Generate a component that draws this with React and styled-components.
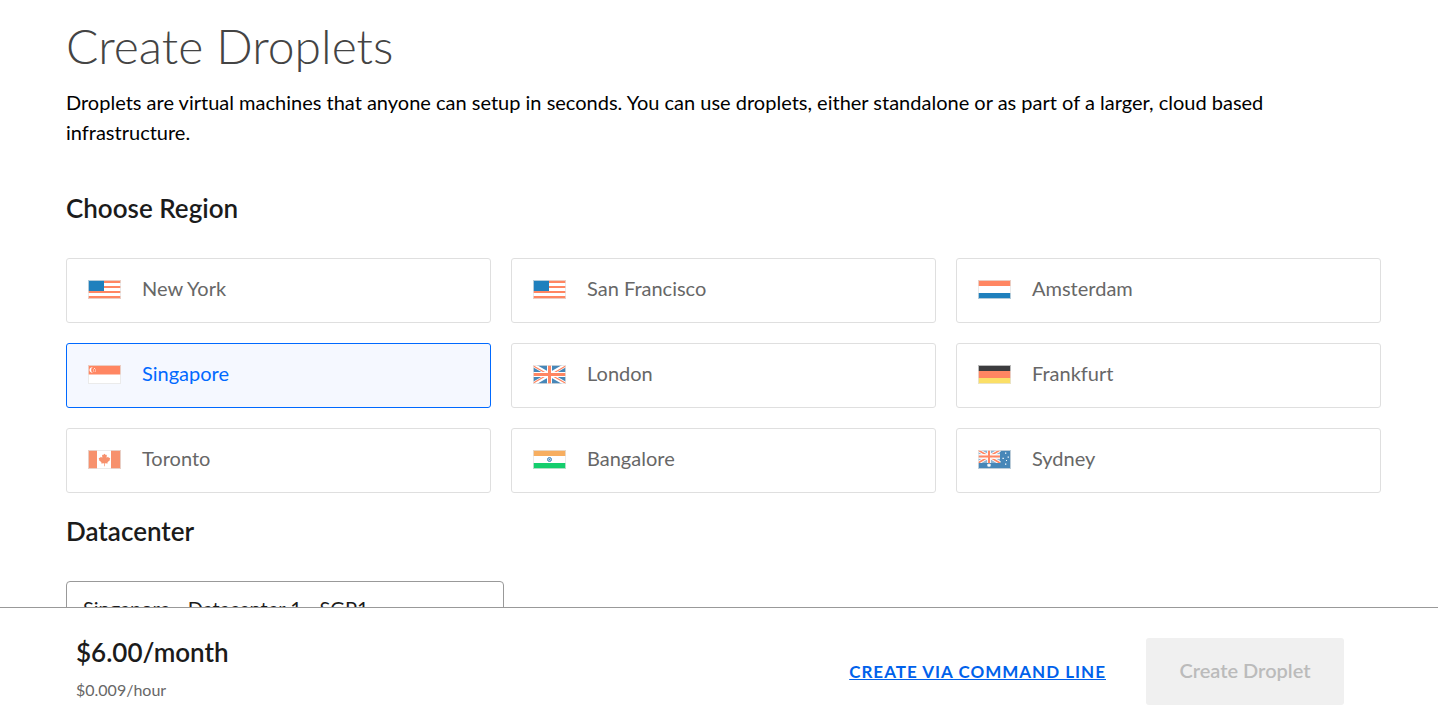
import React, { useState } from "react";
import styled, { createGlobalStyle } from "styled-components";

const GlobalStyle = createGlobalStyle`
  * { box-sizing: border-box; }
  body {
    margin: 0;
    background: #fff;
    color: #000;
    font-family: Lato, "Open Sans", sans-serif;
    font-size: 20px;
    line-height: 30px;
  }
`;

const Page = styled.main`
  padding: 16px 57px 140px 66px;
`;

const Title = styled.h1`
  margin: 0;
  font-size: 48px;
  font-weight: 300;
  line-height: 60px;
  color: #444;
`;

const Intro = styled.p`
  margin: 11px 0 45px;
`;

const SectionTitle = styled.h2`
  margin: 0 0 34px;
  font-size: 26px;
  font-weight: 600;
  line-height: 32px;
  color: #1b1b1b;
`;

const RegionGrid = styled.div`
  display: grid;
  grid-template-columns: repeat(3, 1fr);
  gap: 20px;
  margin-bottom: 22px;
`;

const RegionCard = styled.label`
  display: flex;
  align-items: center;
  gap: 21px;
  height: 65px;
  padding: 0 21px 2px;
  border: 1px solid ${(p) => (p.$active ? "#0069ff" : "#dfdfdf")};
  border-radius: 3px;
  background: ${(p) => (p.$active ? "#f5f8ff" : "#fff")};
  color: ${(p) => (p.$active ? "#0069ff" : "#676767")};
  cursor: pointer;

  &:focus-within { box-shadow: 0 0 0 1px #0069ff; }
`;

const RegionName = styled.span`
  padding-bottom: 4px;
`;

const RegionRadio = styled.input`
  position: absolute;
  opacity: 0;
  width: 1px;
  height: 1px;
  margin: 0;
  pointer-events: none;
`;

const FlagSvg = styled.svg`
  flex: none;
  display: block;
  width: 33px;
  height: 19px;
`;

const DatacenterSelect = styled.select`
  display: block;
  width: calc(100% / 3);
  height: 54px;
  padding: 0 16px;
  border: 1px solid #999;
  border-radius: 4px;
  background: #fff;
  color: #1b1b1b;
  font: inherit;
  appearance: none;
`;

const Footer = styled.footer`
  position: fixed;
  inset: auto 0 0;
  display: flex;
  align-items: flex-start;
  justify-content: space-between;
  padding: 30px 94px 15px 76px;
  border-top: 1px solid #999;
  background: #fff;
`;

const Price = styled.div`
  display: flex;
  flex-direction: column;
  gap: 12px;
`;

const Monthly = styled.strong`
  font-size: 26px;
  font-weight: 600;
  line-height: 28px;
  color: #1b1b1b;
`;

const Hourly = styled.span`
  font-size: 16px;
  line-height: 24px;
  color: #676767;
`;

const Actions = styled.div`
  display: flex;
  align-items: center;
  gap: 40px;
`;

const CommandLink = styled.a`
  font-size: 17px;
  font-weight: 700;
  letter-spacing: 1px;
  text-transform: uppercase;
  color: #0061eb;
`;

const CreateButton = styled.button`
  width: 198px;
  height: 67px;
  padding: 0 0 4px;
  border: 0;
  border-radius: 3px;
  background: #f0f0f0;
  color: #bbb;
  font: inherit;
  font-weight: 600;
`;

const RED = "#ff8662";
const NAVY = "#4787b8";
const BLUE = "#1f80bd";

function Flag({ base = "#fff", children }) {
  return (
    <FlagSvg viewBox="0 0 33 19" aria-hidden="true">
      <rect width="33" height="19" fill={base} />
      {children}
      <rect x=".5" y=".5" width="32" height="18" fill="none" stroke="#e4e4e4" strokeOpacity=".75" />
    </FlagSvg>
  );
}

const UsFlag = () => (
  <Flag>
    <path d="M0 0h33v3H0zM0 6h33v2H0zM0 11h33v2H0zM0 16h33v3H0z" fill={RED} />
    <path d="M0 0h16v11H0z" fill={BLUE} />
  </Flag>
);

const NlFlag = () => (
  <Flag>
    <path d="M0 0h33v6H0z" fill={RED} />
    <path d="M0 13h33v6H0z" fill={BLUE} />
  </Flag>
);

const SgFlag = () => (
  <Flag>
    <path d="M0 0h33v9.5H0z" fill={RED} />
    <path d="M4.8 2.2A2.8 2.8 0 1 0 4.8 7.7 3.1 3.1 0 0 1 4.8 2.2z" fill="#fff" />
    <path d="M6 3h1v1H6zM5 4.5h1v1H5zM7 4.5h1v1H7zM5.4 6.2h.8v.8h-.8zM6.9 6.2h.8v.8h-.8z" fill="#fff" fillOpacity=".8" />
  </Flag>
);

const GbFlag = () => (
  <Flag base={NAVY}>
    <path d="M0 0l33 19M33 0L0 19" stroke="#fff" strokeWidth="3.8" />
    <path d="M0 .8l14 8M19 9l14-8.2M0 18.2l14-8.2M19 10.5l14 8" stroke={RED} strokeWidth="1.1" />
    <path d="M14 0h5v19h-5zM0 7h33v5H0z" fill="#fff" />
    <path d="M15 0h3v19h-3zM0 8h33v3H0z" fill={RED} />
  </Flag>
);

const DeFlag = () => (
  <Flag base={RED}>
    <path d="M0 0h33v6H0z" fill="#3c3c3e" />
    <path d="M0 13h33v6H0z" fill="#fbdf66" />
  </Flag>
);

const CaFlag = () => (
  <Flag>
    <path d="M0 0h9v19H0zM23 0h10v19H23z" fill="#f7916d" />
    <path
      d="M16.5 3.8l1.3 1.3 1-.3-.2 3 1.6-1.1.5 1 1.6.2-.7 1.4.5.8-2.6 2.1.1 1.2-2.8-.2v3h-.7v-3l-2.8.2.1-1.2-2.6-2.1.5-.8-.7-1.4 1.6-.2.5-1 1.6 1.1-.2-3 1 .3z"
      fill="#f7916d"
    />
  </Flag>
);

const InFlag = () => (
  <Flag>
    <path d="M0 0h33v6H0z" fill="#f7ae60" />
    <path d="M0 13h33v6H0z" fill="#14ce6d" />
    <circle cx="16.5" cy="9.5" r="2" fill="#b9d2e8" stroke={NAVY} />
    <circle cx="16.5" cy="9.5" r=".7" fill={NAVY} />
  </Flag>
);

const AuFlag = () => (
  <Flag base={NAVY}>
    <path d="M0 0h22v13H0z" fill="#8fb4d2" />
    <path d="M0 0l22 13M22 0L0 13" stroke="#fff" strokeWidth="3.4" />
    <path d="M0 0l22 13M22 0L0 13" stroke={RED} strokeWidth="1.6" />
    <path d="M9 0h4v13H9zM0 4h22v5H0z" fill="#fff" fillOpacity=".85" />
    <path d="M10 0h2v13h-2zM0 5.5h22v2H0z" fill={RED} />
    <path d="M0 13h22v6H0z" fill={NAVY} />
    <path d="M11 13l.6 1.2 1.3-.2-.5 1.2.8 1-1.3.1-.9 1-.9-1-1.3-.1.8-1-.5-1.2 1.3.2z" fill="#fff" />
    <path d="M27 2.5h1.3v1.3H27zM24.5 7.8h1.3v1.3h-1.3zM29.6 6.5h1.3v1.3h-1.3zM28 10h1v1h-1zM27 13.5h1.3v1.3H27z" fill="#fff" />
  </Flag>
);

const REGIONS = [
  { name: "New York", Icon: UsFlag },
  { name: "San Francisco", Icon: UsFlag },
  { name: "Amsterdam", Icon: NlFlag },
  { name: "Singapore", Icon: SgFlag },
  { name: "London", Icon: GbFlag },
  { name: "Frankfurt", Icon: DeFlag },
  { name: "Toronto", Icon: CaFlag },
  { name: "Bangalore", Icon: InFlag },
  { name: "Sydney", Icon: AuFlag },
];

export default function App() {
  const [region, setRegion] = useState("Singapore");

  return (
    <>
      <GlobalStyle />
      <Page>
        <Title>Create Droplets</Title>
        <Intro>
          Droplets are virtual machines that anyone can setup in seconds. You can use droplets,
          either standalone or as part of a larger, cloud based infrastructure.
        </Intro>
        <SectionTitle id="region-title">Choose Region</SectionTitle>
        <RegionGrid role="radiogroup" aria-labelledby="region-title">
          {REGIONS.map(({ name, Icon }) => (
            <RegionCard key={name} $active={name === region}>
              <RegionRadio
                type="radio"
                name="region"
                value={name}
                checked={name === region}
                onChange={() => setRegion(name)}
              />
              <Icon />
              <RegionName>{name}</RegionName>
            </RegionCard>
          ))}
        </RegionGrid>
        <SectionTitle>
          <label htmlFor="datacenter">Datacenter</label>
        </SectionTitle>
        <DatacenterSelect id="datacenter">
          <option>Singapore - Datacenter 1 - SGP1</option>
        </DatacenterSelect>
      </Page>
      <Footer>
        <Price>
          <Monthly>$6.00/month</Monthly>
          <Hourly>$0.009/hour</Hourly>
        </Price>
        <Actions>
          <CommandLink href="#command-line">Create via command line</CommandLink>
          <CreateButton type="button" disabled>Create Droplet</CreateButton>
        </Actions>
      </Footer>
    </>
  );
}
